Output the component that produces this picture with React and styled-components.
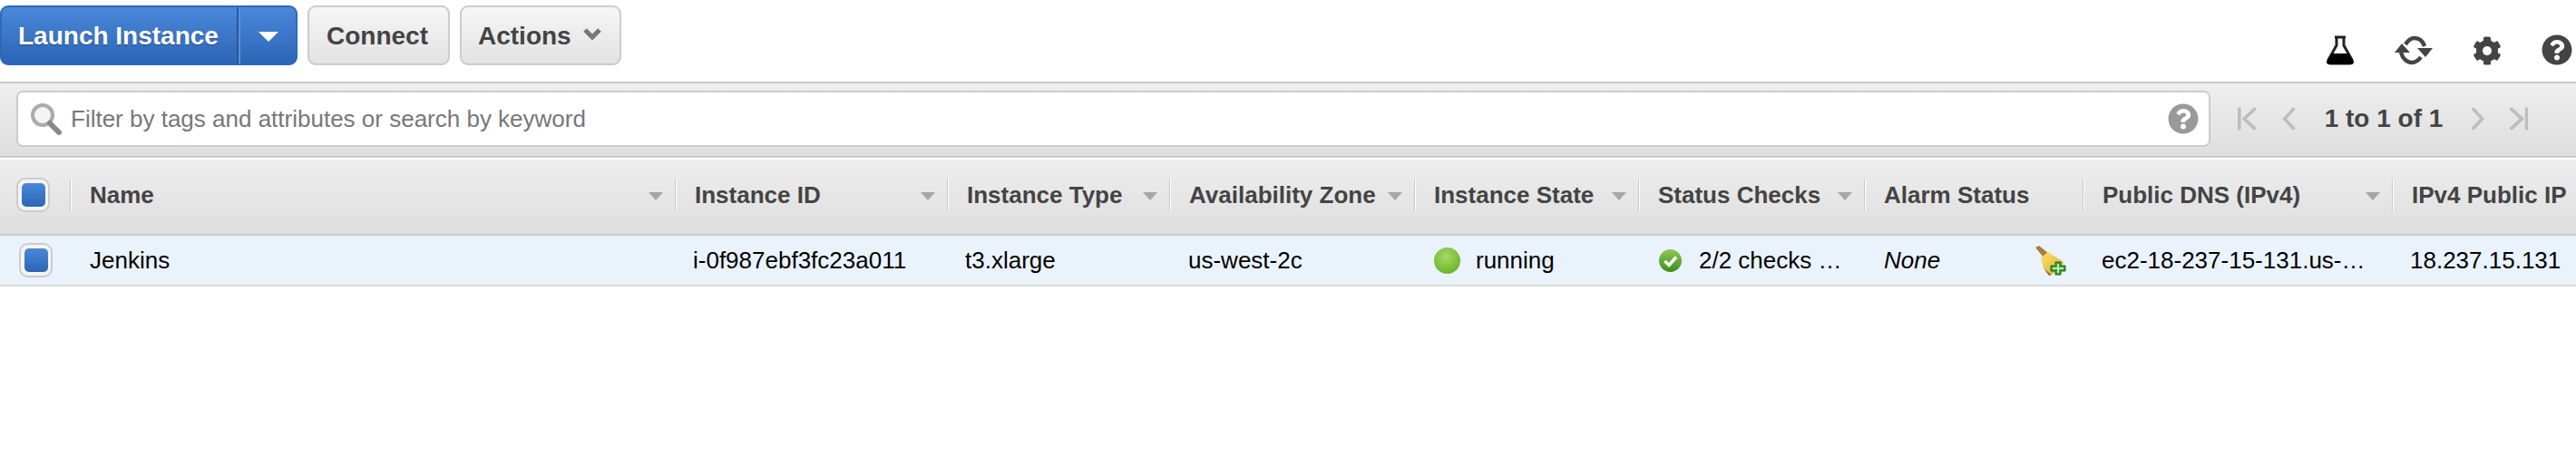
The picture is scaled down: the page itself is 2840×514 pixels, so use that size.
import React from 'react'
import styled, { createGlobalStyle } from 'styled-components'
import { FaCog, FaQuestionCircle } from 'react-icons/fa'

const GlobalStyle = createGlobalStyle`
  html, body {
    margin: 0;
    padding: 0;
    background: #fff;
    font-family: "Liberation Sans", Arial, sans-serif;
  }
`

const columnTemplate = '77px 667px 300px 245px 270px 247px 249px 241px 341px 203px'

const Page = styled.div`
  width: 2840px;
  height: 514px;
  overflow: hidden;
  background: #fff;
`

const Toolbar = styled.div`
  height: 90px;
  box-sizing: border-box;
  padding: 6px 4px 18px 0;
  display: flex;
  align-items: flex-end;
  justify-content: space-between;
`

const ButtonGroup = styled.div`
  display: flex;
  gap: 11px;
`

const PrimaryButton = styled.div`
  width: 328px;
  height: 66px;
  box-sizing: border-box;
  display: flex;
  border: 2px solid #2e69b8;
  border-radius: 9px;
  background: linear-gradient(#4b88da, #2b65b5);
  color: #fff;
  font-size: 28px;
  font-weight: 700;
  text-shadow: 0 1px 1px rgba(0, 0, 0, 0.35);
`

const PrimaryLabel = styled.div`
  width: 261px;
  box-sizing: border-box;
  padding: 2px 0 0 18px;
  display: flex;
  align-items: center;
  border-right: 2px solid #2458a0;
  box-shadow: 2px 0 0 #5a90d8;
`

const PrimaryCaret = styled.div`
  flex: 1;
  display: flex;
  align-items: center;
  justify-content: center;
  padding-left: 2px;
  &::after {
    content: '';
    border-left: 11px solid transparent;
    border-right: 11px solid transparent;
    border-top: 11px solid #fff;
    margin-top: 2px;
  }
`

const GrayButton = styled.div`
  width: ${(p) => p.$width}px;
  height: 66px;
  box-sizing: border-box;
  padding: 2px 0 0 ${(p) => p.$pad}px;
  display: flex;
  align-items: center;
  gap: 13px;
  border: 2px solid #ccc;
  border-radius: 9px;
  background: linear-gradient(#f6f6f6, #e2e2e2);
  color: #444;
  font-size: 28px;
  font-weight: 700;
`

const Chevron = styled.svg`
  display: block;
  margin-bottom: 6px;
`

const ToolIcons = styled.div`
  display: flex;
  align-items: flex-end;
  gap: 44px;
  color: #444;
`

const FilterBar = styled.div`
  height: 84px;
  box-sizing: border-box;
  display: flex;
  align-items: center;
  border-top: 2px solid #ccc;
  border-bottom: 2px solid #ccc;
  background: linear-gradient(#eeeeee, #dedede);
  padding: 0 0 2px 18px;
`

const SearchBox = styled.div`
  width: 2419px;
  height: 62px;
  box-sizing: border-box;
  display: flex;
  align-items: center;
  gap: 9px;
  padding: 0 11px 0 13px;
  border: 2px solid #ccc;
  border-radius: 7px;
  background: #fff;
  color: #777;
  font-size: 26px;
`

const Placeholder = styled.span`
  flex: 1;
`

const Pager = styled.div`
  width: 350px;
  box-sizing: border-box;
  padding-left: 30px;
  display: flex;
  align-items: center;
`

const PagerArrow = styled.svg`
  display: block;
  margin-left: ${(p) => p.$ml || 0}px;
`

const PagerText = styled.div`
  margin: 0 32px;
  width: 133px;
  white-space: nowrap;
  font-size: 28px;
  font-weight: 700;
  color: #444;
`

const HeaderRow = styled.div`
  margin-top: 2px;
  height: 84px;
  box-sizing: border-box;
  display: grid;
  grid-template-columns: ${columnTemplate};
  align-items: center;
  border-bottom: 2px solid #ccc;
  background: linear-gradient(#eeeeee, #dedede);
  padding-bottom: 4px;
`

const HeaderCell = styled.div`
  height: 36px;
  box-sizing: border-box;
  display: flex;
  align-items: center;
  justify-content: space-between;
  padding: 0 13px 0 21px;
  border-left: 1px solid #c8c8c8;
  box-shadow: inset 1px 0 0 #fff;
  color: #444;
  font-size: 26px;
  font-weight: 700;
  white-space: nowrap;
`

const CheckCell = styled.div`
  display: flex;
  align-items: center;
  padding-left: ${(p) => p.$pad}px;
`

const SortArrow = styled.span`
  border-left: 8px solid transparent;
  border-right: 8px solid transparent;
  border-top: 9px solid #a6a6a6;
  margin-top: 2px;
`

const Check = styled.div`
  width: 37px;
  height: 38px;
  box-sizing: border-box;
  display: flex;
  align-items: center;
  justify-content: center;
  border: 2px solid #ccc;
  border-radius: 10px;
  background: #f4f4f4;
  &::after {
    content: '';
    width: 26px;
    height: 26px;
    border-radius: 5px;
    background: linear-gradient(#4b88da, #2b65b5);
  }
`

const DataRow = styled.div`
  height: 56px;
  box-sizing: border-box;
  display: grid;
  grid-template-columns: ${columnTemplate};
  align-items: center;
  border-bottom: 2px solid #ddd;
  background: #eaf2fc;
`

const DataCell = styled.div`
  display: flex;
  align-items: center;
  justify-content: ${(p) => (p.$spread ? 'space-between' : 'flex-start')};
  gap: ${(p) => p.$gap || 0}px;
  padding: 0 ${(p) => (p.$spread ? 16 : 0)}px 0 ${(p) => p.$pad || 21}px;
  color: #000;
  font-size: 26px;
  font-style: ${(p) => (p.$italic ? 'italic' : 'normal')};
  white-space: nowrap;
`

const Ball = styled.span`
  width: 29px;
  height: 29px;
  border-radius: 50%;
  background: radial-gradient(circle at 45% 35%, #a6dc62, #6cb52f 75%, #5a9f26);
`

const FlaskIcon = () => (
  <svg width="32" height="33" viewBox="0 0 32 33">
    <path d="M10 2h12M12 2v9L3 27q-1 4 3 4h20q4 0 3-4L20 11V2" fill="none" stroke="#222" strokeWidth="3" />
    <path d="M7 20h18l6 9q0 3-3 3H4q-3 0-3-3z" fill="#000" />
  </svg>
)

const RefreshIcon = () => (
  <svg width="42" height="34" viewBox="0 0 42 34">
    <path d="M12 11C15 6 18 4 22 4c5 0 9 3 11 9" fill="none" stroke="#444" strokeWidth="4.5" />
    <path d="M7 20c2 7 7 11 12 11 4 0 7-2 10-6" fill="none" stroke="#444" strokeWidth="4.5" />
    <path d="M8 10l9 10H0zM25 15h17l-8 10z" fill="#444" />
  </svg>
)

const SearchIcon = () => (
  <svg width="36" height="36" viewBox="0 0 36 36">
    <circle cx="14" cy="14" r="11" fill="#f4f4f4" stroke="#aaa" strokeWidth="4" />
    <path d="M22 23l10 10" stroke="#888" strokeWidth="6" strokeLinecap="round" />
  </svg>
)

const CheckBadge = () => (
  <svg width="25" height="25" viewBox="0 0 25 25">
    <defs>
      <linearGradient id="badge" x1="0" y1="0" x2="0" y2="1">
        <stop offset="0" stopColor="#8ccb52" />
        <stop offset="1" stopColor="#3f8a1e" />
      </linearGradient>
    </defs>
    <circle cx="12.5" cy="12.5" r="12.5" fill="url(#badge)" />
    <path d="M6.5 13l4.5 4.5 8-9" fill="none" stroke="#fff" strokeWidth="3.5" />
  </svg>
)

const BroomIcon = () => (
  <svg width="36" height="33" viewBox="0 0 36 33">
    <defs>
      <linearGradient id="brush" x1="0" y1="0" x2="1" y2="1">
        <stop offset="0" stopColor="#fbe36a" />
        <stop offset="1" stopColor="#dcaa2c" />
      </linearGradient>
    </defs>
    <path d="M0 2l4-2 11 9-5 5z" fill="#a67c3c" />
    <path d="M6 13l8-6 17 11-2 5-11 9-9-7z" fill="url(#brush)" />
    <path d="M9 25l9 7-3 1z" fill="#8a6a30" />
    <path d="M22 18h6v4h5v6h-5v4h-6v-4h-5v-6h5z" fill="#3d9a35" stroke="#1f6b1f" strokeWidth="1" />
    <path d="M24 20h2v4h5v2h-5v4h-2v-4h-5v-2h5z" fill="#bfeeb0" />
  </svg>
)

const Arrow = ({ d, width, ml }) => (
  <PagerArrow $ml={ml} width={width} height="28" viewBox={`0 0 ${width} 28`}>
    <path d={d} fill="none" stroke="#bdbdbd" strokeWidth="4" />
  </PagerArrow>
)

const headers = [
  { id: 'Name', label: 'Name', sort: true },
  { id: 'InstanceId', label: 'Instance ID', sort: true },
  { id: 'InstanceType', label: 'Instance Type', sort: true },
  { id: 'Zone', label: 'Availability Zone', sort: true },
  { id: 'State', label: 'Instance State', sort: true },
  { id: 'Checks', label: 'Status Checks', sort: true },
  { id: 'Alarm', label: 'Alarm Status' },
  { id: 'Dns', label: 'Public DNS (IPv4)', sort: true },
  { id: 'Ip', label: 'IPv4 Public IP' },
]

const App = () => (
  <Page>
    <GlobalStyle />
    <Toolbar>
      <ButtonGroup>
        <PrimaryButton>
          <PrimaryLabel>Launch Instance</PrimaryLabel>
          <PrimaryCaret />
        </PrimaryButton>
        <GrayButton $width={157} $pad={19}>Connect</GrayButton>
        <GrayButton $width={178} $pad={18}>
          Actions
          <Chevron width="20" height="13" viewBox="0 0 20 13">
            <path d="M2 2l8 8 8-8" fill="none" stroke="#777" strokeWidth="5" />
          </Chevron>
        </GrayButton>
      </ButtonGroup>
      <ToolIcons>
        <FlaskIcon />
        <RefreshIcon />
        <FaCog size={32} />
        <FaQuestionCircle size={34} />
      </ToolIcons>
    </Toolbar>

    <FilterBar>
      <SearchBox>
        <SearchIcon />
        <Placeholder>Filter by tags and attributes or search by keyword</Placeholder>
        <FaQuestionCircle size={34} color="#999" />
      </SearchBox>
      <Pager>
        <Arrow width={24} d="M2 0v28M22 1L8 14l14 13" />
        <Arrow width={16} ml={28} d="M15 1L3 14l12 13" />
        <PagerText>1 to 1 of 1</PagerText>
        <Arrow width={16} d="M1 1l12 13L1 27" />
        <Arrow width={24} ml={26} d="M2 1l14 13L2 27M22 0v28" />
      </Pager>
    </FilterBar>

    <HeaderRow>
      <CheckCell $pad={18}><Check /></CheckCell>
      {headers.map((h) => (
        <HeaderCell key={h.id}>
          {h.label}
          {h.sort && <SortArrow />}
        </HeaderCell>
      ))}
    </HeaderRow>

    <DataRow>
      <CheckCell $pad={21}><Check /></CheckCell>
      <DataCell $pad={22}>Jenkins</DataCell>
      <DataCell $pad={20}>i-0f987ebf3fc23a011</DataCell>
      <DataCell $pad={20}>t3.xlarge</DataCell>
      <DataCell>us-west-2c</DataCell>
      <DataCell $pad={22} $gap={17}><Ball />running</DataCell>
      <DataCell $pad={23} $gap={19}><CheckBadge />2/2 checks …</DataCell>
      <DataCell $pad={22} $italic $spread>None<BroomIcon /></DataCell>
      <DataCell>ec2-18-237-15-131.us-…</DataCell>
      <DataCell $pad={20}>18.237.15.131</DataCell>
    </DataRow>
  </Page>
)

export default App
